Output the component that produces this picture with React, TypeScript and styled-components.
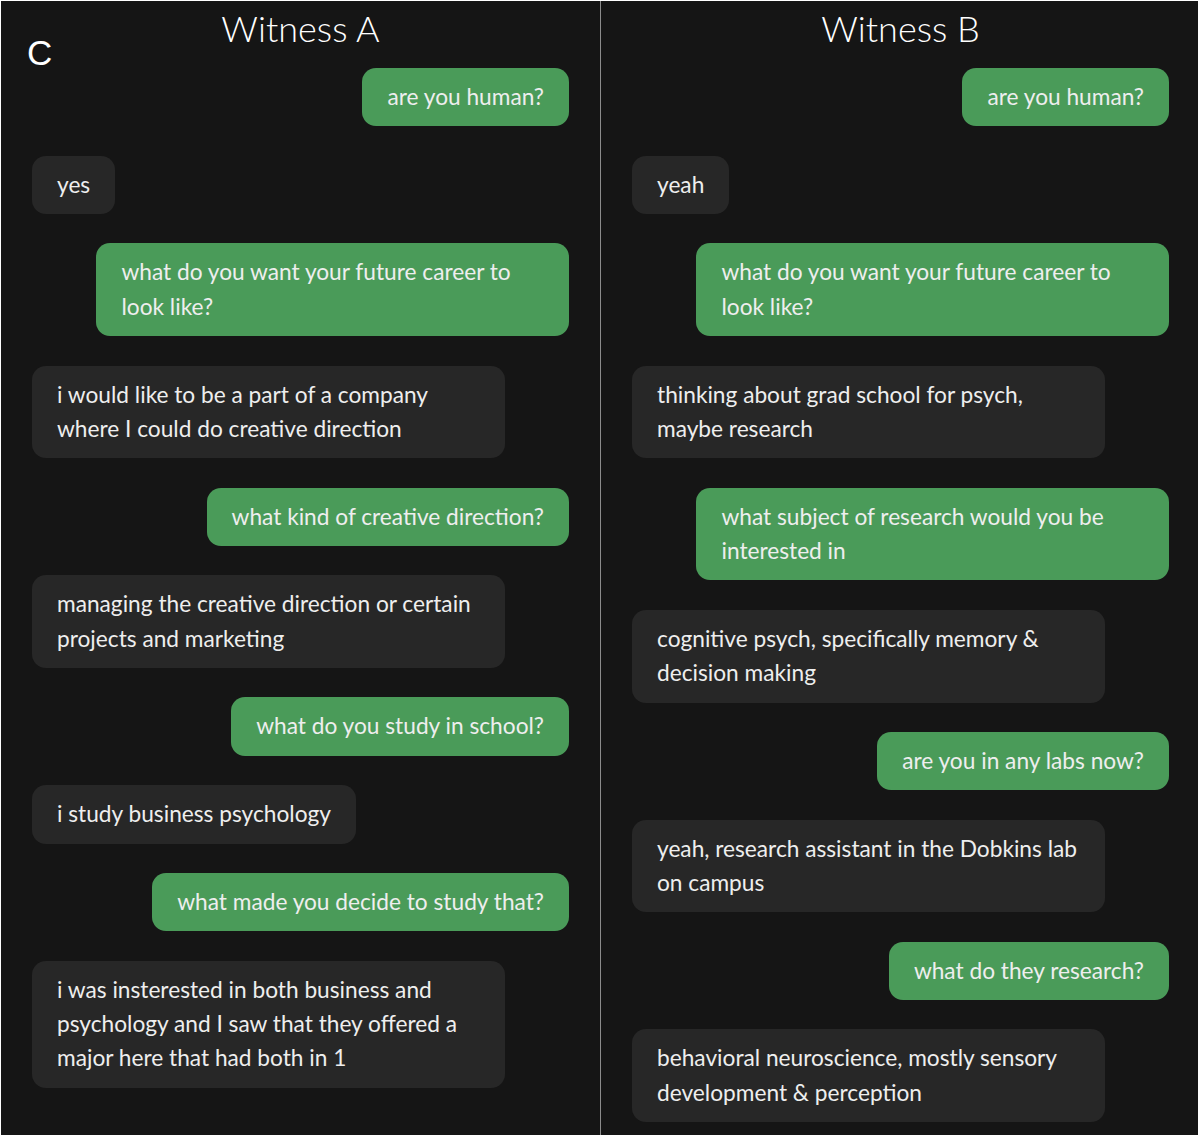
import styled, { createGlobalStyle } from 'styled-components'

type Message = { from: 'judge' | 'witness'; text: string }

const witnessA: Message[] = [
  { from: 'judge', text: 'are you human?' },
  { from: 'witness', text: 'yes' },
  { from: 'judge', text: 'what do you want your future career to look like?' },
  { from: 'witness', text: 'i would like to be a part of a company where I could do creative direction' },
  { from: 'judge', text: 'what kind of creative direction?' },
  { from: 'witness', text: 'managing the creative direction or certain projects and marketing' },
  { from: 'judge', text: 'what do you study in school?' },
  { from: 'witness', text: 'i study business psychology' },
  { from: 'judge', text: 'what made you decide to study that?' },
  {
    from: 'witness',
    text: 'i was insterested in both business and psychology and I saw that they offered a major here that had both in 1',
  },
]

const witnessB: Message[] = [
  { from: 'judge', text: 'are you human?' },
  { from: 'witness', text: 'yeah' },
  { from: 'judge', text: 'what do you want your future career to look like?' },
  { from: 'witness', text: 'thinking about grad school for psych, maybe research' },
  { from: 'judge', text: 'what subject of research would you be interested in' },
  { from: 'witness', text: 'cognitive psych, specifically memory & decision making' },
  { from: 'judge', text: 'are you in any labs now?' },
  { from: 'witness', text: 'yeah, research assistant in the Dobkins lab on campus' },
  { from: 'judge', text: 'what do they research?' },
  { from: 'witness', text: 'behavioral neuroscience, mostly sensory development & perception' },
]

export default function App() {
  return (
    <>
      <GlobalStyle />
      <Page>
        <Board>
          <PanelLabel>C</PanelLabel>
          <Column $first>
            <Heading>Witness A</Heading>
            <Thread>
              {witnessA.map((m, i) => (
                <Bubble key={i} $judge={m.from === 'judge'}>
                  {m.text}
                </Bubble>
              ))}
            </Thread>
          </Column>
          <Column>
            <Heading>Witness B</Heading>
            <Thread>
              {witnessB.map((m, i) => (
                <Bubble key={i} $judge={m.from === 'judge'}>
                  {m.text}
                </Bubble>
              ))}
            </Thread>
          </Column>
        </Board>
      </Page>
    </>
  )
}

const GlobalStyle = createGlobalStyle`
  body {
    margin: 0;
    background: #ffffff;
  }
`

const Page = styled.div`
  width: 1200px;
  height: 1138px;
  padding: 1px 2px 3px 1px;
  box-sizing: border-box;
  background: #ffffff;
`

const Board = styled.div`
  position: relative;
  height: 100%;
  display: grid;
  grid-template-columns: 600px 1fr;
  background: #151515;
  font-family: Lato, 'Open Sans', sans-serif;
`

// figure panel letter sitting over the first column
const PanelLabel = styled.div`
  position: absolute;
  left: 26px;
  top: 32px;
  font-family: 'Liberation Sans', Arial, sans-serif;
  font-size: 35px;
  line-height: 40px;
  color: #ffffff;
`

const Column = styled.div<{ $first?: boolean }>`
  padding: ${(p) => (p.$first ? '0 31px' : '0 29px 0 31px')};
  border-right: ${(p) => (p.$first ? '1px solid #8c8c8c' : 'none')};
  display: flex;
  flex-direction: column;
`

const Heading = styled.div`
  height: 67px;
  padding-top: 5px;
  box-sizing: border-box;
  text-align: center;
  font-size: 36px;
  font-weight: 300;
  line-height: 44px;
  color: #ffffff;
`

const Thread = styled.div`
  display: flex;
  flex-direction: column;
  gap: 29.3px;
`

const Bubble = styled.div<{ $judge: boolean }>`
  align-self: ${(p) => (p.$judge ? 'flex-end' : 'flex-start')};
  max-width: 88%;
  box-sizing: border-box;
  padding: 12px 25px;
  border-radius: 14px;
  background: ${(p) => (p.$judge ? '#4a9b59' : '#272727')};
  color: #eeeeee;
  font-size: 22.7px;
  line-height: 34.4px;
`
